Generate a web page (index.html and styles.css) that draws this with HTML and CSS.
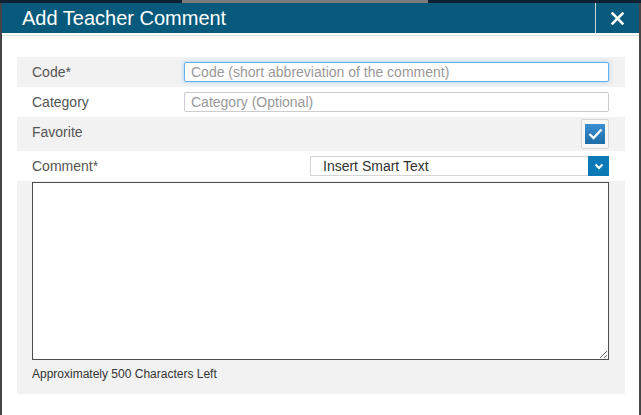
FILE: index.html
```html
<!DOCTYPE html>
<html>
<head>
<meta charset="utf-8">
<link rel="stylesheet" href="styles.css">
</head>
<body>
<div class="page">
  <div class="topstrip"><div class="topblock"></div></div>
  <div class="dialog">
    <div class="titlebar">
      <div class="title">Add Teacher Comment</div>
      <div class="close">
        <svg width="13" height="13" viewBox="0 0 13 13"><path d="M1.5 1.5 L11.5 11.5 M11.5 1.5 L1.5 11.5" stroke="#fff" stroke-width="2.6" stroke-linecap="square"/></svg>
      </div>
    </div>
    <div class="rule"></div>
    <div class="panel">
      <div class="row shade">
        <div class="label">Code*</div>
        <div class="field focus"><span class="ph">Code (short abbreviation of the comment)</span></div>
      </div>
      <div class="row">
        <div class="label">Category</div>
        <div class="field"><span class="ph">Category (Optional)</span></div>
      </div>
      <div class="row shade tall">
        <div class="label up">Favorite</div>
        <div class="checkwrap">
          <div class="checkframe">
            <div class="checkbox">
              <svg width="15" height="12" viewBox="0 0 15 12"><path d="M1.5 6 L5.5 10 L13.5 1.5" fill="none" stroke="#fff" stroke-width="2.4"/></svg>
            </div>
          </div>
        </div>
      </div>
      <div class="row">
        <div class="label">Comment*</div>
        <div class="select">
          <span class="selecttext">Insert Smart Text</span>
          <span class="selectbtn">
            <svg width="10" height="7" viewBox="0 0 10 7"><path d="M1.5 1.5 L5 5 L8.5 1.5" fill="none" stroke="#fff" stroke-width="2"/></svg>
          </span>
        </div>
      </div>
      <div class="area shade">
        <textarea class="textarea"></textarea>
        <div class="remaining">Approximately 500 Characters Left</div>
      </div>
    </div>
  </div>
</div>
</body>
</html>
```
FILE: styles.css
```css
html, body {
  margin: 0;
  padding: 0;
}
body {
  font-family: "Liberation Sans", Arial, sans-serif;
  background: #3c3c3c;
}
.page {
  width: 641px;
  height: 415px;
  display: flex;
  flex-direction: column;
  background: #454545;
  overflow: hidden;
}
.topstrip {
  height: 3px;
  background: #0f2233;
  padding-left: 182px;
}
.topblock {
  width: 246px;
  height: 3px;
  background: #7b7b7b;
}
.dialog {
  flex: 1;
  margin: 0 2px;
  background: #fff;
  display: flex;
  flex-direction: column;
}
.titlebar {
  height: 30px;
  background: #075a7c;
  display: flex;
  align-items: stretch;
}
.title {
  flex: 1;
  padding-left: 20px;
  color: #fff;
  font-size: 20px;
  line-height: 30px;
}
.close {
  width: 43px;
  border-left: 1px solid #c9d7df;
  display: flex;
  align-items: center;
  justify-content: center;
}
.rule {
  margin-top: 2px;
  border-top: 1px solid #e4e4e4;
}
.panel {
  margin: 21px 14px 0 15px;
  display: flex;
  flex-direction: column;
}
.row {
  height: 30px;
  display: grid;
  grid-template-columns: 167px 1fr;
  align-items: center;
  padding-right: 16px;
}
.row.tall {
  height: 34px;
}
.shade {
  background: #f2f2f2;
}
.label {
  padding-left: 15px;
  font-size: 14px;
  color: #555;
}
.label.up {
  margin-top: -4px;
}
.field {
  height: 18px;
  border: 1px solid #ccc;
  border-radius: 2px;
  background: #fff;
  display: flex;
  align-items: center;
  padding-left: 6px;
}
.field.focus {
  border-color: #66afe9;
  box-shadow: 0 0 4px rgba(102, 175, 233, 0.6);
}
.ph {
  font-size: 14px;
  color: #999;
}
.checkwrap {
  display: flex;
  justify-content: flex-end;
}
.checkframe {
  width: 20px;
  height: 20px;
  padding: 4px 3px;
  border: 1px solid #d6d6d6;
  border-radius: 2px;
  background: #f7f7f7;
}
.checkbox {
  width: 20px;
  height: 20px;
  background: linear-gradient(#3a8fd2, #1e6ca7);
  display: flex;
  align-items: center;
  justify-content: center;
}
.select {
  justify-self: end;
  width: 297px;
  height: 18px;
  border: 1px solid #d5d5d5;
  background: #fff;
  display: flex;
  align-items: stretch;
}
.selecttext {
  flex: 1;
  padding-left: 12px;
  font-size: 14px;
  color: #333;
  line-height: 19px;
}
.selectbtn {
  width: 21px;
  background: #0a79b6;
  display: flex;
  align-items: center;
  justify-content: center;
  margin: -1px -1px -1px 0;
}
.area {
  height: 212px;
  padding: 1px 16px 0 15px;
  display: flex;
  flex-direction: column;
}
.textarea {
  height: 176px;
  margin: 0;
  border: 1px solid #4d4d4d;
  border-radius: 0;
  padding: 0;
  background: #fff;
  resize: vertical;
  display: block;
  font-family: "Liberation Sans", Arial, sans-serif;
}
.remaining {
  margin-top: 7px;
  font-size: 12px;
  color: #333;
}
```
